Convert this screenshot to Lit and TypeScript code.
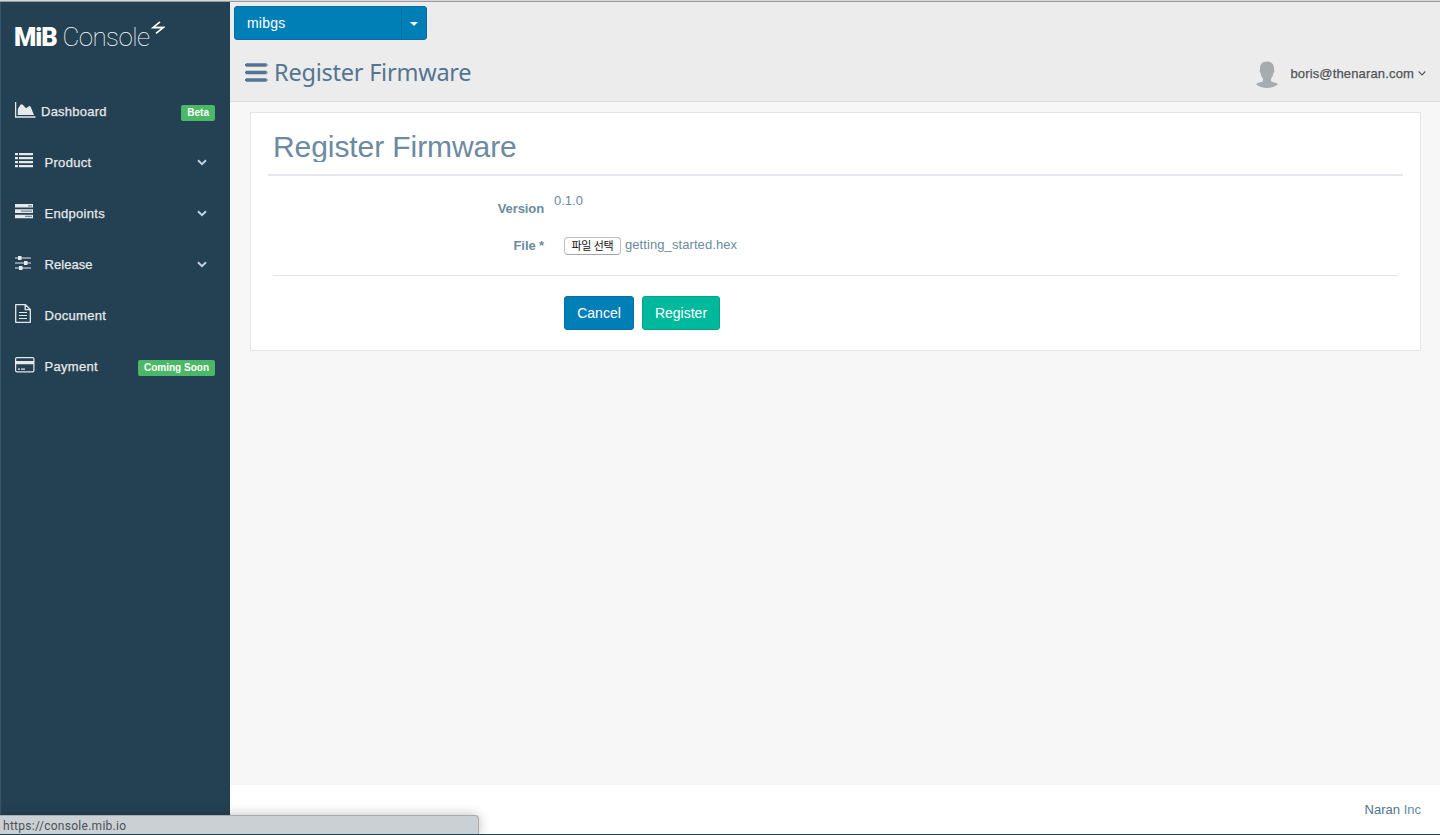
import { LitElement, html, css, svg, nothing } from "lit";
import { customElement } from "lit/decorators.js";

const icons: Record<string, unknown> = {
  dashboard: svg`<svg width="21" height="16" viewBox="0 0 21 16"><path d="M.6 0v15H20.500" fill="none" stroke="currentColor" stroke-width="1.300"/><path d="M2.800 13V7l2.700-4.200q1.200-1.200 2.300 0l3.200 3.400 2.500-1.700q1.500-1 2.300.5L19 13z" fill="currentColor"/></svg>`,
  product: svg`<svg width="18" height="15" viewBox="0 0 18 15"><path d="M0 0h3v2.300H0zM4 0h14v2.300H4zM0 4h3v2.300H0zM4 4h14v2.300H4zM0 8h3v2.300H0zM4 8h14v2.300H4zM0 12h3v2.300H0zM4 12h14v2.300H4z" fill="currentColor"/></svg>`,
  endpoints: svg`<svg width="18" height="15" viewBox="0 0 18 15"><path fill="currentColor" d="M0 0h18v3.500H0zM0 5.300h18v3.600H0zM0 10.700h18v3.500H0z"/><path fill="#6f8592" d="M13 1.200h4v1.200h-4zM6 6.400h11v1.400H6zM10 11.700h7V13h-7z"/></svg>`,
  release: svg`<svg width="16" height="14" viewBox="0 0 16 14"><path d="M0 2h16M0 7h16M0 12h16" stroke="currentColor" stroke-width="1.200"/><path d="M3 0h3.500v4H3zM9 5h3.500v4H9zM4 10h3.500v4H4z" fill="currentColor"/></svg>`,
  document: svg`<svg width="16" height="19" viewBox="0 0 16 19"><path d="M.7.7h9.800l4.800 4.800v12.800H.7zM10.200.7v5h5" fill="none" stroke="currentColor" stroke-width="1.300" stroke-linejoin="round"/><path d="M4 8.500h8M4 11.500h8M4 14.500h8" stroke="currentColor" stroke-width="1.100"/></svg>`,
  payment: svg`<svg width="20" height="16" viewBox="0 0 20 16"><rect x=".6" y=".6" width="18.300" height="14.300" rx="1.300" fill="none" stroke="currentColor" stroke-width="1.200"/><path d="M1 4h18v3.200H1zM3 11.500h2v1.200H3zM6 11.500h4v1.200H6z" fill="currentColor"/></svg>`,
};

interface Item { key: string; label: string; badge?: string; sub?: boolean }

const items: Item[] = [
  { key: "dashboard", label: "Dashboard", badge: "Beta" },
  { key: "product", label: "Product", sub: true },
  { key: "endpoints", label: "Endpoints", sub: true },
  { key: "release", label: "Release", sub: true },
  { key: "document", label: "Document" },
  { key: "payment", label: "Payment", badge: "Coming Soon" },
];

@customElement("side-nav")
export class SideNav extends LitElement {
  static styles = css`
    :host { display: block; width: 229px; flex: none; background: #244153; border-left: 1px solid #385468; color: #e6e8e9; }
    svg { display: block; }
    .logo { display: flex; align-items: flex-start; height: 84px; padding-left: 13px; box-sizing: border-box; color: #fff; white-space: nowrap; }
    .mib { font: 900 25.500px/26px Roboto, sans-serif; letter-spacing: -1px; margin-top: 22px; width: 48.500px; }
    .console { font: 100 26px/26px Roboto, sans-serif; letter-spacing: -0.600px; margin-top: 22px; width: 88.500px; }
    .bolt { margin-top: 19px; }
    .item { display: flex; align-items: center; height: 51px; padding: 0 15px 0 14px; font-size: 13px; }
    .icon { width: 29.500px; margin-top: -4px; }
    .icon.dashboard { width: 26px; }
    .label { flex: 1; -webkit-text-stroke: 0.250px currentColor; letter-spacing: 0.300px; }
    .label.dashboard { letter-spacing: 0.250px; }
    .label.release { letter-spacing: 0.050px; }
    .badge { background: #4ab866; color: #fff; font-size: 10px; font-weight: 700; line-height: 16px; border-radius: 2px; padding: 0 6px; margin-top: 3px; }
    .chev { margin: 0 8px 0 0; color: #c0d2de; }
  `;
  render() {
    return html`
      <div class="logo">
        <span class="mib">MiB</span><span class="console">Console</span>
        <svg class="bolt" width="14" height="14" viewBox="0 0 14 14"><path d="M9 .8 2 6.600l10.500-.3L5 12.300" fill="none" stroke="#fff" stroke-width="1.700"/></svg>
      </div>
      ${items.map((i) => html`
        <div class="item">
          <span class="icon ${i.key}">${icons[i.key]}</span>
          <span class="label ${i.key}">${i.label}</span>
          ${i.badge ? html`<span class="badge">${i.badge}</span>` : nothing}
          ${i.sub ? html`<svg class="chev" width="10" height="7" viewBox="0 0 10 7"><path d="M1 1.200l4 4 4-4" fill="none" stroke="currentColor" stroke-width="2"/></svg>` : nothing}
        </div>`)}
    `;
  }
}

@customElement("app-root")
export class AppRoot extends LitElement {
  static styles = css`
    :host { display: flex; flex-direction: column; width: 1440px; height: 835px; overflow: hidden; position: relative; box-sizing: border-box; font: 13px/20px "Liberation Sans", Arial, sans-serif; color: #6c8aa0; border-bottom: 1px solid #244153; background: #f7f7f7; }
    svg { display: block; }
    .edge { height: 2px; background: #d8d8d8; border-bottom: 1px solid #9a9b9e; flex: none; box-sizing: border-box; }
    .body { flex: 1; display: flex; min-height: 0; }
    .main { flex: 1; display: flex; flex-direction: column; }
    .header { height: 100px; box-sizing: border-box; background: #ececec; border-bottom: 1px solid #d9dadd; padding: 4px 14px 0 4px; }
    .select { display: flex; width: 193px; height: 34px; box-sizing: border-box; border: 1px solid #006fa5; border-radius: 3px; background: #007fb7; color: #fff; font-size: 14px; line-height: 32px; }
    .value { flex: 1; padding-left: 12px; letter-spacing: 0.200px; }
    .caret { width: 24px; border-left: 1px solid #006fa5; display: flex; align-items: center; justify-content: center; }
    .caret svg { margin-top: 2px; }
    .bar { display: flex; align-items: center; height: 40px; margin-top: 12px; padding-left: 11px; }
    .title { flex: 1; margin: 0 0 0 6px; font: 400 23.500px/40px "Noto Sans", sans-serif; letter-spacing: -0.230px; color: #547591; }
    .avatar { margin: 5px 12px 0 0; }
    .user { color: #515356; -webkit-text-stroke: 0.250px currentColor; letter-spacing: 0.150px; margin: 3px 4px 0 0; }
    .down { margin-top: 2px; }
    .card { margin: 10px 19px 0 20px; height: 239px; box-sizing: border-box; border: 1px solid #e3e5ea; background: #fff; padding: 0 17px; }
    .heading { margin: 0; padding: 17px 0 0 5px; height: 63px; box-sizing: border-box; border-bottom: 2px solid #e5e7ec; font-size: 30px; font-weight: 400; line-height: 33px; letter-spacing: -0.080px; }
    .clip { display: block; height: 32px; overflow: hidden; }
    .row { display: flex; }
    .name { width: 276px; text-align: right; font-weight: 700; letter-spacing: -0.100px; }
    .row.version { height: 46px; padding-top: 14px; box-sizing: border-box; }
    .version .name { padding-top: 9px; }
    .version .val { padding: 1px 0 0 10px; }
    .row.file { align-items: center; height: 48px; }
    .file .val { margin-top: -2px; letter-spacing: 0.080px; }
    .choose { box-sizing: border-box; width: 57px; height: 18px; margin: -1px 4px 0 20px; border: 1px solid #bdbdbd; border-bottom-color: #a5a5a5; border-radius: 4px; background: #fff; color: #111; font: 11px/15px "Noto Sans CJK KR", sans-serif; letter-spacing: -0.150px; text-align: center; padding: 0; white-space: nowrap; }
    .actions { margin: 5px 5px 0; border-top: 1px solid #e3e5e5; padding: 20px 0 0 291px; display: flex; gap: 8px; }
    .btn { box-sizing: border-box; height: 34px; border: 1px solid #006fa5; border-radius: 3px; background: #007fb7; color: #fff; font: 14px/32px "Liberation Sans", Arial, sans-serif; padding: 0; width: 70px; text-align: center; }
    .btn.ok { background: #00b99c; border-color: #00a489; width: 78px; }
    .footer { margin-top: auto; height: 49px; background: #fff; text-align: right; padding-right: 19px; line-height: 49px; color: #6b8ba5; }
    .footer b { font-weight: 400; color: #4f7390; }
    .status { position: absolute; left: 0; bottom: -1px; width: 479px; height: 20px; box-sizing: border-box; background: #cbd0d4; border: 1px solid #a9adb0; border-width: 1px 1px 0 0; border-radius: 0 4px 0 0; box-shadow: 0 0 12px rgba(0, 0, 0, 0.250); font: 12px/20px Roboto, sans-serif; color: #4c5155; padding-left: 3px; letter-spacing: 0.280px; }
  `;
  render() {
    return html`
      <div class="edge"></div>
      <div class="body">
        <side-nav></side-nav>
        <div class="main">
          <div class="header">
            <div class="select"><span class="value">mibgs</span><span class="caret"><svg width="8" height="4" viewBox="0 0 8 4"><path d="M0 0h8L4 4z" fill="#fff"/></svg></span></div>
            <div class="bar">
              <svg width="23" height="19" viewBox="0 0 23 19"><path d="M1 2h20.500M1 9.500h20.500M1 17h20.500" stroke="#547591" stroke-width="3.600"/><path d="M.5 1v2M.5 8.500v2M.5 16v2M22 1v2M22 8.500v2M22 16v2" stroke="#547591"/></svg>
              <h1 class="title">Register Firmware</h1>
              <svg class="avatar" width="22" height="27" viewBox="0 0 22 27"><path d="M11 0c5 0 7.200 3 7 8 .6.600.5 2.500-.6 3.500-.4 2.500-1 4-2.400 5.500v2.500c1 1.300 6 1.500 7 3.200C19 25.300 15 26.500 11 26.500S3 25.300 0 22.700C1 21 6 20.800 7 19.500V17c-1.400-1.500-2-3-2.400-5.500C3.500 10.500 3.400 8.600 4 8c-.2-5 2-8 7-8z" fill="#a5abae" transform="translate(0 .5)"/></svg>
              <span class="user">boris@thenaran.com</span>
              <svg class="down" width="8" height="5" viewBox="0 0 8 5"><path d="M.7.5 4 3.900 7.300.5" fill="none" stroke="#515356" stroke-width="1.100"/></svg>
            </div>
          </div>
          <div class="card">
            <h2 class="heading"><span class="clip">Register Firmware</span></h2>
            <div class="row version"><span class="name">Version</span><span class="val">0.1.0</span></div>
            <div class="row file"><span class="name">File *</span><button class="choose">파일 선택</button><span class="val">getting_started.hex</span></div>
            <div class="actions"><button class="btn">Cancel</button><button class="btn ok">Register</button></div>
          </div>
          <div class="footer"><b>Naran</b> Inc</div>
        </div>
      </div>
      <div class="status">https://console.mib.io</div>
    `;
  }
}
